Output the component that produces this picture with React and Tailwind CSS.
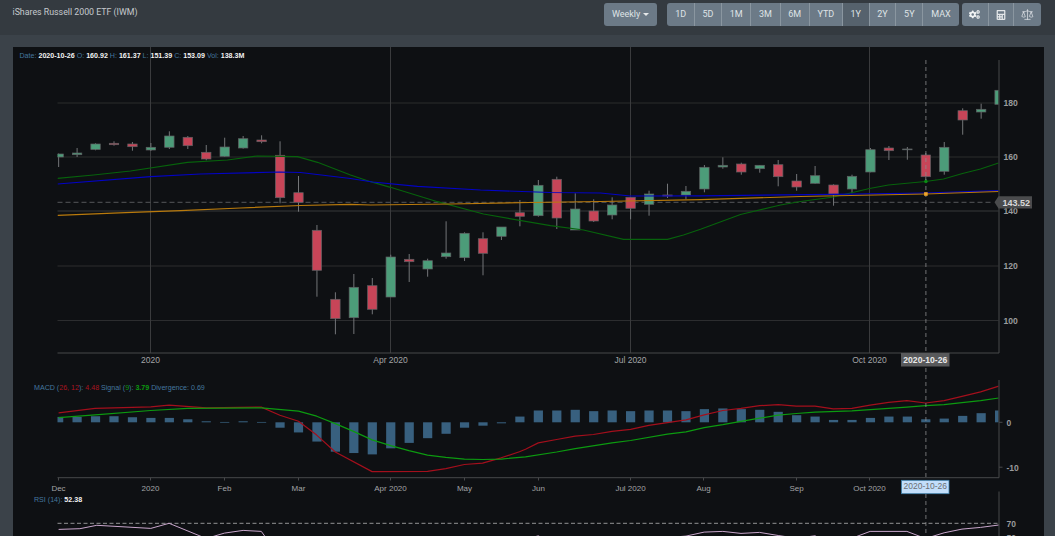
import { FaCogs, FaCalculator } from 'react-icons/fa';
import { Scale } from 'lucide-react';

const SANS = '"Liberation Sans", Arial, sans-serif';
const candleX = (i) => 58.15 + 18.45 * i;

// [wickTop, bodyTop, bodyBottom, wickBottom, up?]
const CANDLES = [
  [153.5, 154, 157, 167, 1], [148, 153, 154.7, 157, 1], [143.3, 144, 149.5, 150.3, 1], [141.3, 143.3, 144.7, 145.7, 0],
  [142, 144, 146.7, 150.7, 0], [143, 147.3, 150, 151, 1], [131.3, 136, 147.3, 149, 1], [136, 137.3, 145.7, 149, 0],
  [145, 152.3, 159, 160.3, 0], [137.7, 147, 156.3, 156.7, 1], [136, 138.7, 148, 148.7, 1], [135.3, 140, 141.7, 143.3, 0],
  [141.3, 155.3, 197.7, 203.3, 0], [176, 192.7, 202.3, 211.7, 0], [225, 230.3, 270.3, 296.7, 0], [292.3, 299.3, 318.7, 334.3, 0],
  [274, 287.3, 317.7, 334, 1], [278, 285.7, 309.3, 314.3, 0], [254.7, 257, 297, 297, 1], [254, 259.3, 261.7, 282, 0],
  [258.7, 260.7, 269, 276.7, 1], [221.3, 253, 256.7, 258.7, 1], [232.3, 233.3, 257.7, 261, 1], [232.3, 238.7, 253.3, 275.3, 0],
  [227, 227, 236.3, 240, 1], [200, 212.7, 216.3, 226.3, 0], [180, 185.3, 215.7, 216.7, 1], [176.7, 179.3, 218, 229, 0],
  [193.3, 209, 230, 230, 1], [199.3, 211, 221, 222, 0], [197.3, 205, 215, 219.3, 1], [197.3, 197.3, 208.3, 219.3, 0],
  [190.7, 194, 204.3, 215.7, 1], [183.7, 195, 196, 198, 0], [186, 191.3, 195, 199.3, 1], [165, 167.3, 189, 192.3, 1],
  [157.3, 165.3, 167, 168.7, 1], [162.7, 164, 172, 174.7, 0], [165.3, 165.3, 168.7, 172.7, 1], [160, 164.7, 176.7, 186.3, 0],
  [174, 181, 187, 190.7, 0], [166, 175.7, 183.3, 183.7, 1], [184.3, 185, 194, 205.7, 0], [174.7, 176.3, 189, 193.3, 1],
  [148, 149.7, 172, 172.3, 1], [146, 148, 150.7, 160, 0], [147, 149, 149.8, 159.7, 1], [153, 155, 176.7, 180, 0],
  [142, 147.3, 171.3, 174.7, 1], [108.3, 110.7, 120, 134.7, 0], [103.7, 109.3, 112, 118.7, 1], [90.3, 90.3, 104.3, 104.3, 1],
];

const BARS = [16, 16, 18, 18, 15, 13, 13, 9, 3, 1, 3, 1, -16, -30, -57, -87, -91, -95, -77, -61, -47, -34, -16, -10, -3, 17,
  35, 35, 37, 33, 35, 33, 35, 35, 33, 39, 41, 39, 37, 31, 21, 17, 7, 7, 13, 17, 17, 9, 11, 19, 27, 35];

const SMA_SLOW = [[57, 178.3], [93, 175], [130, 171], [187, 162.3], [227, 160], [257, 156], [297, 156.7], [317, 162.3], [350, 175], [370, 181.7], [390, 187.3], [437, 201.7], [483, 214], [550, 225.7], [583, 230], [623, 239.3], [667, 239.3], [683, 235], [700, 229.3], [740, 214.5], [780, 205], [800, 201.5], [833, 197], [869, 188.5], [888, 185], [925, 181.5], [943, 179], [962, 173.5], [980, 169], [998, 163]];
const SMA_BLUE = [[57, 184], [150, 176.7], [200, 174], [279, 172], [300, 172.5], [350, 178.5], [372, 182], [417, 186.3], [480, 190], [550, 192.5], [600, 193], [630, 196], [700, 195.8], [833, 194.3], [925, 193], [998, 190.7]];
const SMA_ORANGE = [[57, 215.3], [125, 212.7], [180, 210.7], [240, 208], [300, 205.5], [350, 204.3], [370, 205], [450, 204], [530, 202.5], [600, 201.5], [700, 199.7], [800, 196.5], [925, 194], [998, 191.5]];

// macd and rsi points are read off the crop, so scale them back to page pixels
const low = (pts, ox = 0) => pts.map(([x, y]) => [ox + x / 2.96, 375 + y / 2.96]);
const MACD_RED = [
  ...low([[172, 112], [280, 99], [445, 94], [499, 89], [609, 97], [772, 95], [827, 119], [882, 137], [936, 178], [991, 228], [1100, 286], [1264, 285], [1318, 277], [1373, 265], [1427, 261], [1482, 245], [1536, 227]]),
  ...low([[0, 220], [38, 201], [92, 191], [147, 181], [201, 176], [256, 167], [311, 161], [365, 149], [420, 141], [475, 133], [529, 118], [584, 105], [638, 99], [693, 91], [748, 88], [802, 92], [857, 92], [911, 100], [966, 99], [1020, 89], [1075, 81], [1129, 76], [1184, 83], [1239, 76], [1292, 63], [1347, 50], [1401, 33]], 525),
];
const MACD_GREEN = [
  ...low([[172, 126], [280, 118], [445, 105], [554, 99], [772, 97], [882, 107], [936, 122], [991, 144], [1045, 167], [1100, 192], [1155, 209], [1209, 224], [1264, 237], [1318, 244], [1373, 249], [1427, 250], [1482, 249]]),
  ...low([[0, 242], [92, 228], [147, 218], [256, 201], [311, 194], [420, 175], [475, 168], [529, 156], [584, 147], [638, 137], [693, 128], [748, 119], [802, 114], [857, 110], [966, 106], [1075, 99], [1129, 95], [1184, 91], [1239, 88], [1292, 82], [1347, 76], [1401, 68]], 525),
];
const RSI = [
  ...low([[172, 457], [235, 455], [285, 445], [445, 454], [499, 439], [609, 484], [663, 468], [718, 460], [772, 463], [795, 495]]),
  ...low([[-30, 495], [38, 476], [75, 495], [320, 495], [365, 478], [420, 481], [475, 477], [529, 465], [584, 463], [638, 469], [693, 466], [748, 475], [802, 483], [857, 476], [895, 495], [935, 495], [1020, 463], [1129, 463], [1184, 484], [1239, 467], [1292, 456], [1347, 451], [1401, 444]], 525),
];

const toPoints = (pts) => pts.map(([x, y]) => `${x.toFixed(1)},${y.toFixed(1)}`).join(' ');

const RANGES = ['1D', '5D', '1M', '3M', '6M', 'YTD', '1Y', '2Y', '5Y', 'MAX'];
const MONTHS = [['Dec', 58], ['2020', 150], ['Feb', 224], ['Mar', 298], ['Apr 2020', 390], ['May', 464], ['Jun', 538], ['Jul 2020', 630], ['Aug', 703], ['Sep', 796], ['Oct 2020', 869]];

function Line({ pts, color, width = 1.2 }) {
  return <polyline points={toPoints(pts)} fill="none" stroke={color} strokeWidth={width} strokeLinejoin="round" />;
}

function Chart() {
  return (
    <svg viewBox="12.5 47 1031.5 489" className="block w-full h-full" style={{ fontFamily: SANS }}>
      <defs>
        <clipPath id="price"><rect x="57" y="60" width="941" height="293" /></clipPath>
        <clipPath id="macd"><rect x="57" y="380" width="941" height="98" /></clipPath>
      </defs>

      {/* price pane */}
      {[[103, '#222325', 1.4], [157, '#222325', 1.4], [211, '#37383a', 1], [266, '#2c2d2f', 1], [320.5, '#2c2d2f', 1]].map(([y, c, w]) => (
        <line key={y} x1="57" x2="998" y1={y} y2={y} stroke={c} strokeWidth={w} />
      ))}
      {[150, 390, 630, 869].map((x) => (
        <line key={x} x1={x} x2={x} y1="47" y2="353" stroke="#3a3b3d" />
      ))}
      <line x1="57" x2="990" y1="202.3" y2="202.3" stroke="#55575a" strokeDasharray="5 3" />
      <g clipPath="url(#price)">
        {CANDLES.map(([wt, bt, bb, wb, up], i) => {
          const x = candleX(i);
          return (
            <g key={i}>
              <line x1={x} x2={x} y1={wt} y2={wb} stroke="#737578" />
              <rect x={x - 4.7} y={bt} width="9.4" height={bb - bt} fill={up ? '#4c9c79' : '#c74558'} stroke="#5f6063" strokeWidth="0.7" />
            </g>
          );
        })}
        <Line pts={SMA_SLOW} color="#07620c" />
        <Line pts={SMA_BLUE} color="#0303c4" />
        <Line pts={SMA_ORANGE} color="#b97a0c" />
      </g>
      <line x1="57" x2="998.5" y1="353" y2="353" stroke="#47484a" />
      <line x1="998.5" x2="998.5" y1="60" y2="353" stroke="#47484a" />
      {[[180, 103], [160, 157], [140, 211], [120, 266], [100, 320.5]].map(([v, y]) => (
        <text key={v} x="1003" y={y + 3.2} fontSize="8.6" fill="#9a9b9d" fontWeight="700">{v}</text>
      ))}
      <polygon points="994,202.3 998,196.3 1031.5,196.3 1031.5,208.6 998,208.6" fill="#4a4b4d" />
      <text x="1002" y="205.6" fontSize="9" fill="#d8d8d8" fontWeight="700">143.52</text>
      {[['2020', 150], ['Apr 2020', 390], ['Jul 2020', 630], ['Oct 2020', 869]].map(([t, x]) => (
        <text key={t} x={x} y="362.5" fontSize="8.5" fill="#a3a4a6" textAnchor="middle">{t}</text>
      ))}

      {/* macd pane */}
      <g clipPath="url(#macd)">
        {BARS.map((h, i) => {
          const px = h / 2.96;
          return <rect key={i} x={candleX(i) - 4.6} y={px > 0 ? 422.3 - px : 422.3} width="9.2" height={Math.max(Math.abs(px), 0.7)} fill="#38607f" />;
        })}
        <Line pts={MACD_RED} color="#a30f1c" />
        <Line pts={MACD_GREEN} color="#0c9a10" />
      </g>
      <line x1="57" x2="998.5" y1="477.7" y2="477.7" stroke="#47484a" />
      <line x1="998.5" x2="998.5" y1="380" y2="477.7" stroke="#47484a" />
      <line x1="998.5" x2="1002" y1="422.3" y2="422.3" stroke="#47484a" />
      <line x1="998.5" x2="1002" y1="467.2" y2="467.2" stroke="#47484a" />
      <text x="1006" y="425.5" fontSize="8.5" fill="#9a9b9d" fontWeight="700">0</text>
      <text x="1006" y="470.5" fontSize="8.5" fill="#9a9b9d" fontWeight="700">-10</text>
      {MONTHS.map(([t, x]) => (
        <g key={t}>
          <line x1={x} x2={x} y1="477.7" y2="480.5" stroke="#47484a" />
          <text x={x} y="491" fontSize="8" fill="#a3a4a6" textAnchor="middle">{t}</text>
        </g>
      ))}

      {/* rsi pane */}
      <line x1="57" x2="998.5" y1="523.3" y2="523.3" stroke="#b4b5b7" strokeDasharray="4 2.5" strokeWidth="0.8" />
      <Line pts={RSI} color="#c8a6cb" width={1} />
      <line x1="998.5" x2="998.5" y1="491.5" y2="536" stroke="#47484a" />
      <text x="1006" y="526.5" fontSize="8.5" fill="#9a9b9d" fontWeight="700">70</text>
      <text x="1006" y="541" fontSize="8.5" fill="#9a9b9d" fontWeight="700">50</text>

      {/* crosshair */}
      <line x1="925.4" x2="925.4" y1="60" y2="536" stroke="#8b8c8e" strokeDasharray="4 3" strokeWidth="0.8" />
      <circle cx="925.4" cy="181.5" r="1.8" fill="#0b8a14" />
      <rect x="923.6" y="192.2" width="3.6" height="3.6" fill="#f0a52a" />
      <rect x="900.5" y="353" width="48.5" height="13.5" fill="#58595b" />
      <text x="924.8" y="362.5" fontSize="8.6" fill="#e8e8e8" textAnchor="middle" fontWeight="700">2020-10-26</text>
      <rect x="901" y="480.3" width="47.5" height="13.4" fill="#c2defa" stroke="#3c7ea8" strokeWidth="0.8" />
      <text x="924.8" y="489" fontSize="8.5" fill="#6d6f72" textAnchor="middle">2020-10-26</text>

      {/* legends */}
      <text x="19" y="57.8" fontSize="7.1" fontWeight="700" fill="#f2f2f2">
        <tspan fill="#44779f" fontWeight="400">Date: </tspan>2020-10-26
        <tspan fill="#44779f" fontWeight="400"> O: </tspan>160.92
        <tspan fill="#44779f" fontWeight="400"> H: </tspan>161.37
        <tspan fill="#44779f" fontWeight="400"> L: </tspan>151.39
        <tspan fill="#44779f" fontWeight="400"> C: </tspan>153.09
        <tspan fill="#44779f" fontWeight="400"> Vol: </tspan>138.3M
      </text>
      <text x="33.5" y="389.5" fontSize="7.1" fill="#44779f">
        MACD (<tspan fill="#a81420">26, 12</tspan>): <tspan fill="#a81420">4.48</tspan> Signal (<tspan fill="#0c9a10">9</tspan>): <tspan fill="#0c9a10" fontWeight="700">3.79</tspan> Divergence: 0.69
      </text>
      <text x="33.5" y="502" fontSize="7.1" fill="#44779f">
        RSI (14): <tspan fill="#f2f2f2" fontWeight="700">52.38</tspan>
      </text>
    </svg>
  );
}

export default function App() {
  return (
    <div className="h-[536px] w-[1055px] overflow-hidden bg-[#3b4249] font-['Roboto',sans-serif]">
      <header className="h-[35px] bg-[#343a40] flex justify-between pl-[12.5px] pr-[14px] pt-[3px]">
        <div className="text-[8.8px] leading-[16px] pt-[0.5px] text-[#c5c9cd]">iShares Russell 2000 ETF (IWM)</div>
        <div className="flex h-[23px] text-[9px] text-[#dfe3e6]">
          <button className="w-[53.5px] mr-[10px] rounded-[3px] bg-[#6c7a87] flex items-center justify-center gap-[3px]">
            Weekly
            <span className="border-x-[3px] border-x-transparent border-t-[3px] border-t-[#e5e8ea]"></span>
          </button>
          <div className="flex rounded-[3px] overflow-hidden mr-[3px]">
            {RANGES.map((r, i) => (
              <button
                key={r}
                className={`flex items-center justify-center ${r === 'YTD' ? 'w-[33px]' : r === 'MAX' ? 'w-[36.5px]' : r === '1M' || r === '3M' || r === '6M' ? 'w-[29.3px]' : 'w-[26.8px]'} ${r === '1Y' ? 'bg-[#56626d]' : 'bg-[#6c7a87]'} ${i > 0 ? 'border-l border-l-[#8a96a0]' : ''}`}
              >
                {r}
              </button>
            ))}
          </div>
          <div className="flex rounded-[3px] overflow-hidden">
            <button className="w-[26px] bg-[#6c7a87] flex items-center justify-center text-[#f1f3f4]"><FaCogs size={11} /></button>
            <button className="w-[25.6px] bg-[#6c7a87] border-l border-l-[#8a96a0] flex items-center justify-center text-[#e3e6e9]"><FaCalculator size={10} /></button>
            <button className="w-[27.7px] bg-[#6c7a87] border-l border-l-[#8a96a0] flex items-center justify-center text-[#e3e6e9]"><Scale size={13} strokeWidth={1.3} /></button>
          </div>
        </div>
      </header>
      <main className="mt-[12px] ml-[12.5px] w-[1031.5px] h-[489px] bg-[#0e1013]">
        <Chart />
      </main>
    </div>
  );
}
